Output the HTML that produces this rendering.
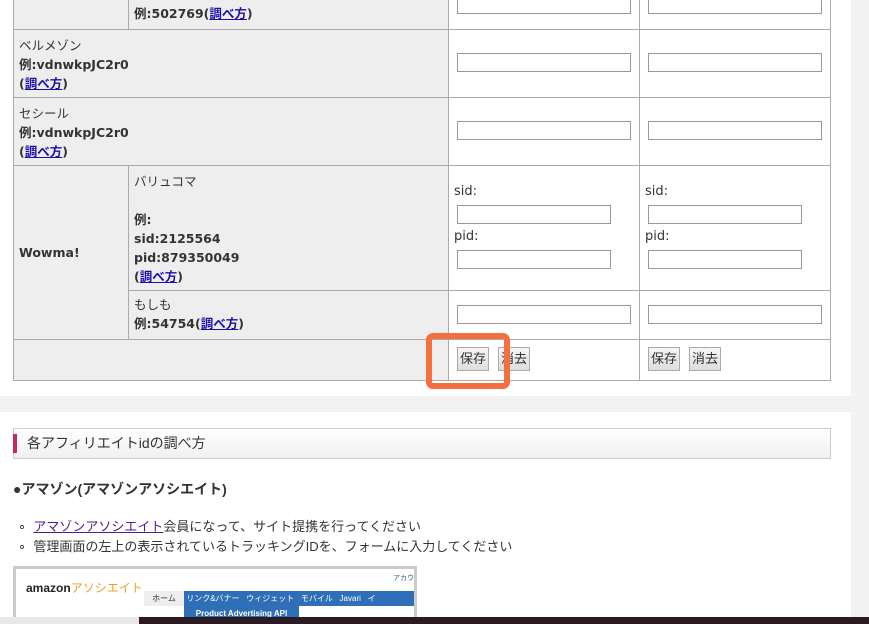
<!DOCTYPE html>
<html><head><meta charset="utf-8"><style>
body{margin:0;width:869px;height:624px;overflow:hidden;background:#f2f2f2;font-family:"Liberation Sans","Noto Sans CJK JP",sans-serif;font-size:13px;color:#333;position:relative}
.card{position:absolute;left:0;width:851px;background:#fff}
.c{position:absolute;box-sizing:border-box;border:1px solid #aaa;background:#eee;font-weight:bold;line-height:19px;padding-left:5px;font-family:"DejaVu Sans","Noto Sans CJK JP",sans-serif;font-size:12.5px}
.w{background:#fff}
a{color:#1a0dab;text-decoration:underline}
.in{position:absolute;width:174px;height:19px;border:1px solid #999;background:#fff;box-sizing:border-box}
.in2{width:154px}
.btn{position:absolute;height:24px;border:1px solid #aaa;background:linear-gradient(#f6f6f6,#ddd);font-size:13px;line-height:22px;padding:0 2px;box-sizing:border-box}
.lbl{position:absolute;font-size:13px;color:#333;font-family:"DejaVu Sans",sans-serif}
</style></head><body>
<div class="card" style="top:0;height:396px"></div>
<div class="card" style="top:412px;height:212px"></div>

<div class="c" style="left:13px;top:-10px;width:116px;height:40px"></div>
<div class="c" style="left:128px;top:-10px;width:321px;height:40px;padding-top:13px">例:502769(<a>調べ方</a>)</div>
<div class="c w" style="left:448px;top:-10px;width:192px;height:40px"></div>
<div class="c w" style="left:639px;top:-10px;width:192px;height:40px"></div>

<div class="c" style="left:13px;top:29px;width:436px;height:69px;padding-top:6px"><span style="font-weight:normal">ベルメゾン</span><br>例:vdnwkpJC2r0<br>(<a>調べ方</a>)</div>
<div class="c w" style="left:448px;top:29px;width:192px;height:69px"></div>
<div class="c w" style="left:639px;top:29px;width:192px;height:69px"></div>

<div class="c" style="left:13px;top:97px;width:436px;height:69px;padding-top:6px"><span style="font-weight:normal">セシール</span><br>例:vdnwkpJC2r0<br>(<a>調べ方</a>)</div>
<div class="c w" style="left:448px;top:97px;width:192px;height:69px"></div>
<div class="c w" style="left:639px;top:97px;width:192px;height:69px"></div>

<div class="c" style="left:13px;top:165px;width:116px;height:175px;padding-top:77px">Wowma!</div>
<div class="c" style="left:128px;top:165px;width:321px;height:126px;padding-top:6px"><span style="font-weight:normal">バリュコマ</span><br><br>例:<br>sid:2125564<br>pid:879350049<br>(<a>調べ方</a>)</div>
<div class="c w" style="left:448px;top:165px;width:192px;height:126px"></div>
<div class="c w" style="left:639px;top:165px;width:192px;height:126px"></div>
<div class="c" style="left:128px;top:290px;width:321px;height:50px;padding-top:4px"><span style="font-weight:normal">もしも</span><br>例:54754(<a>調べ方</a>)</div>
<div class="c w" style="left:448px;top:290px;width:192px;height:50px"></div>
<div class="c w" style="left:639px;top:290px;width:192px;height:50px"></div>

<div class="c" style="left:13px;top:339px;width:436px;height:42px"></div>
<div class="c w" style="left:448px;top:339px;width:192px;height:42px"></div>
<div class="c w" style="left:639px;top:339px;width:192px;height:42px"></div>

<div class="in" style="left:457px;top:-5px"></div><div class="in" style="left:648px;top:-5px"></div>
<div class="in" style="left:457px;top:53px"></div><div class="in" style="left:648px;top:53px"></div>
<div class="in" style="left:457px;top:121px"></div><div class="in" style="left:648px;top:121px"></div>
<div class="lbl" style="left:454px;top:184px">sid:</div><div class="lbl" style="left:645px;top:184px">sid:</div>
<div class="in in2" style="left:457px;top:205px"></div><div class="in in2" style="left:648px;top:205px"></div>
<div class="lbl" style="left:454px;top:229px">pid:</div><div class="lbl" style="left:645px;top:229px">pid:</div>
<div class="in in2" style="left:457px;top:250px"></div><div class="in in2" style="left:648px;top:250px"></div>
<div class="in" style="left:457px;top:305px"></div><div class="in" style="left:648px;top:305px"></div>

<div class="btn" style="left:457px;top:347px">保存</div><div class="btn" style="left:498px;top:347px">消去</div>
<div class="btn" style="left:648px;top:347px">保存</div><div class="btn" style="left:689px;top:347px">消去</div>
<div style="position:absolute;left:426px;top:333px;width:72px;height:44px;border:6px solid #f4703f;border-radius:7px"></div>

<div style="position:absolute;left:13px;top:428px;width:818px;height:31px;box-sizing:border-box;border:1px solid #ccc;background:linear-gradient(#fff,#f0f0f0)"></div>
<div style="position:absolute;left:13px;top:434px;width:4px;height:19px;background:#c8285a"></div>
<div style="position:absolute;left:27px;top:433px;font-size:14px;line-height:20px">各アフィリエイトidの調べ方</div>
<div style="position:absolute;left:13px;top:479px;font-size:14px;font-weight:bold;line-height:20px">●アマゾン(アマゾンアソシエイト)</div>
<div style="position:absolute;left:18px;top:517px;font-size:13px;line-height:20px">∘&nbsp;&nbsp;<a style="color:#551a8b">アマゾンアソシエイト</a>会員になって、サイト提携を行ってください<br>∘&nbsp;&nbsp;管理画面の左上の表示されているトラッキングIDを、フォームに入力してください</div>

<div style="position:absolute;left:13px;top:566px;width:404px;height:58px;border:3px solid #ccc;border-bottom:0;background:#fff;box-sizing:border-box;overflow:hidden">
<div style="position:absolute;left:10px;top:10px;font-size:12px;font-weight:bold;color:#222">amazon<span style="color:#f0a020;font-weight:normal">アソシエイト</span></div>
<div style="position:absolute;left:377px;top:4px;font-size:7px;color:#369;white-space:nowrap">アカウ</div>
<div style="position:absolute;left:128px;top:22px;width:40px;height:15px;background:#eee;font-size:8px;text-align:center;line-height:15px">ホーム</div>
<div style="position:absolute;left:168px;top:22px;width:240px;height:15px;background:#2e6fb7;color:#fff;font-size:8px;line-height:15px;white-space:nowrap">&nbsp;リンク&amp;バナー&nbsp;&nbsp;&nbsp;ウィジェット&nbsp;&nbsp;&nbsp;モバイル&nbsp;&nbsp;&nbsp;Javari&nbsp;&nbsp;&nbsp;イ</div>
<div style="position:absolute;left:168px;top:37px;width:115px;height:15px;background:#2e6fb7;color:#fff;font-size:8px;font-weight:bold;line-height:15px;text-align:center">Product Advertising API</div>
</div>
<div style="position:absolute;left:139px;top:617px;width:730px;height:7px;background:#2a1a22"></div>
<div style="position:absolute;left:0;top:617px;width:139px;height:7px;background:#e8e8e8"></div>
</body></html>
